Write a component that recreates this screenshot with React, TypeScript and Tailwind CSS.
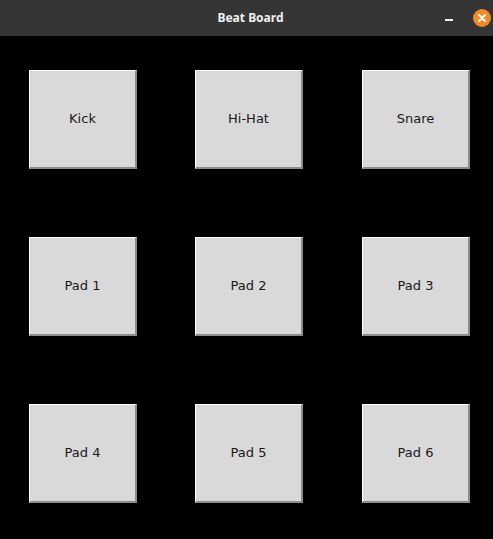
const ROWS = [
  ['Kick', 'Hi-Hat', 'Snare'],
  ['Pad 1', 'Pad 2', 'Pad 3'],
  ['Pad 4', 'Pad 5', 'Pad 6'],
];

function Pad({ label }: { label: string }) {
  return (
    <button className="w-[108px] h-[99px] shrink-0 bg-[#d9d9d9] border-t border-l border-white border-b-2 border-r-2 border-b-[#8c8c8c] border-r-[#8c8c8c] text-[13px] text-[#1a1a1a] flex items-center justify-center">
      {label}
    </button>
  );
}

export default function App() {
  return (
    <div className="w-[493px] h-[539px] bg-black flex flex-col overflow-hidden" style={{ fontFamily: '"DejaVu Sans", sans-serif' }}>
      {/* title bar */}
      <div className="h-[36px] shrink-0 bg-[#353535] relative flex items-center justify-center">
        <span className="ml-[8px] -mt-[1px] text-[12px] font-bold text-[#f0f0f0]" style={{ fontFamily: '"Noto Sans", sans-serif' }}>
          Beat Board
        </span>
        <div className="absolute left-[445px] top-[19px] w-[8px] h-[2px] bg-[#f0f0f0]" />
        <div className="absolute left-[473px] top-[9px] w-[18px] h-[18px] rounded-full bg-[#f08a24] flex items-center justify-center">
          <svg width="10" height="10" viewBox="0 0 10 10">
            <path d="M2 2 L8 8 M8 2 L2 8" stroke="#fff" strokeWidth="2" strokeLinecap="round" />
          </svg>
        </div>
      </div>

      <div className="flex flex-col gap-y-[68px] pt-[34px] pl-[29px]">
        {ROWS.map((row, i) => (
          <div key={i} className="flex">
            <Pad label={row[0]} />
            <div className="w-[58px] shrink-0" />
            <Pad label={row[1]} />
            <div className="w-[59px] shrink-0" />
            <Pad label={row[2]} />
          </div>
        ))}
      </div>
    </div>
  );
}
